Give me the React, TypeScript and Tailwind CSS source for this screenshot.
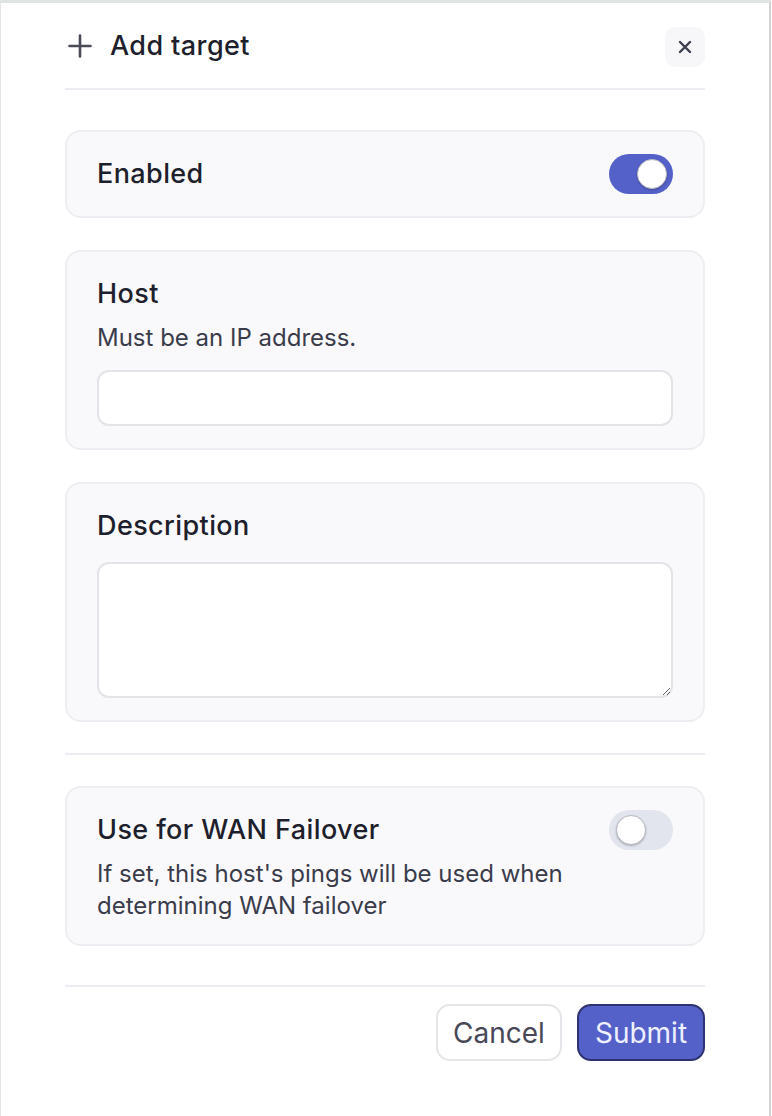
import { useState } from 'react'

function Toggle({ on, onChange }: { on: boolean; onChange: () => void }) {
  return (
    <button
      onClick={onChange}
      className={`relative w-[64px] h-[40px] rounded-full shrink-0 transition-colors ${
        on ? 'bg-[#5461c8]' : 'bg-[#e2e4ee]'
      }`}
    >
      <span
        className={`absolute top-[5px] w-[30px] h-[30px] rounded-full bg-white border border-[#b9bac2] shadow-[0_1px_2px_rgba(0,0,0,0.25)] ${
          on ? 'left-[28px]' : 'left-[7px]'
        }`}
      />
    </button>
  )
}

export default function App() {
  const [enabled, setEnabled] = useState(true)
  const [failover, setFailover] = useState(false)

  return (
    <div className="w-[772px] h-[1116px] bg-white" style={{ fontFamily: 'Inter, "Noto Sans", sans-serif' }}>
      <div className="w-[771px] h-full border-t-[3px] border-t-[#dfe5e1] border-l border-l-[#e4e4e7] border-r-2 border-r-[#d4d4d8] text-[#1e1f2c]">
        <div className="ml-[64px] w-[640px]">
          {/* header */}
          <div className="h-[87px] flex items-center justify-between border-b-2 border-[#ececf2]">
            <div className="flex items-center gap-[18px] pl-[3px]">
              <svg width="24" height="24" viewBox="0 0 24 24" fill="none" stroke="#4a4b57" strokeWidth="2.6" strokeLinecap="round">
                <path d="M12 1.5v21M1.5 12h21" />
              </svg>
              <span className="text-[27px] leading-[36px] font-medium tracking-[0.4px]">Add target</span>
            </div>
            <button className="w-[40px] h-[40px] mt-[2px] rounded-[10px] bg-[#f7f7fa] flex items-center justify-center">
              <svg width="14" height="14" viewBox="0 0 14 14" fill="none" stroke="#3d3e4d" strokeWidth="2.4" strokeLinecap="round">
                <path d="M2 2l10 10M12 2L2 12" />
              </svg>
            </button>
          </div>

          <div className="mt-[40px] flex flex-col gap-[32px]">
            {/* enabled */}
            <div className="h-[88px] rounded-[16px] border-2 border-[#ededf2] bg-[#f9f9fb] px-[30px] flex items-center justify-between">
              <span className="text-[27px] leading-[36px] font-medium tracking-[0.4px]">Enabled</span>
              <Toggle on={enabled} onChange={() => setEnabled(!enabled)} />
            </div>

            {/* host */}
            <div className="rounded-[16px] border-2 border-[#ededf2] bg-[#f9f9fb] px-[30px] pt-[24px] pb-[22px]">
              <div className="text-[27px] leading-[36px] font-medium tracking-[0.4px]">Host</div>
              <div className="mt-[10px] text-[24px] leading-[32px] text-[#3a3c4b]">Must be an IP address.</div>
              <input className="mt-[16px] w-full h-[56px] rounded-[12px] border-2 border-[#e3e3e8] bg-white px-4 text-[22px] outline-none" />
            </div>

            {/* description */}
            <div className="rounded-[16px] border-2 border-[#ededf2] bg-[#f9f9fb] px-[30px] pt-[24px] pb-[22px]">
              <div className="text-[27px] leading-[36px] font-medium tracking-[0.4px]">Description</div>
              <textarea className="block mt-[18px] w-full h-[136px] rounded-[12px] border-2 border-[#e3e3e8] bg-white px-4 py-3 text-[22px] outline-none" />
            </div>
          </div>

          <div className="mt-[31px] border-t-2 border-[#ececf2]" />

          {/* wan failover */}
          <div className="mt-[31px] rounded-[16px] border-2 border-[#ededf2] bg-[#f9f9fb] px-[30px] pt-[22px] pb-[22px]">
            <div className="flex items-center justify-between h-[40px]">
              <span className="text-[27px] leading-[36px] font-medium tracking-[0.4px]">Use for WAN Failover</span>
              <Toggle on={failover} onChange={() => setFailover(!failover)} />
            </div>
            <p className="mt-[8px] text-[24px] leading-[32px] text-[#3a3c4b] max-w-[480px]">
              If set, this host's pings will be used when determining WAN failover
            </p>
          </div>

          <div className="mt-[39px] border-t-2 border-[#ececf2]" />

          {/* footer */}
          <div className="mt-[17px] flex justify-end gap-[15px]">
            <button className="w-[126px] h-[57px] rounded-[14px] border-2 border-[#e6e6ea] bg-white text-[28px] text-[#474857]">
              Cancel
            </button>
            <button className="w-[128px] h-[57px] rounded-[14px] border-2 border-[#2e3270] bg-[#5461c8] text-[28px] text-[#eef0ff]">
              Submit
            </button>
          </div>
        </div>
      </div>
    </div>
  )
}
